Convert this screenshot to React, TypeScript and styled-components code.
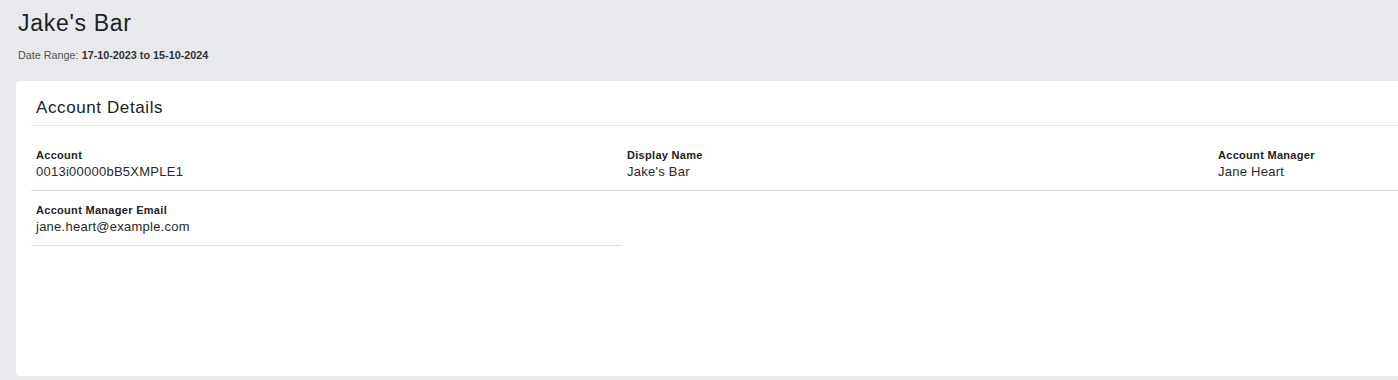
import React from "react";
import styled, { createGlobalStyle } from "styled-components";

const GlobalStyle = createGlobalStyle`
  html, body {
    margin: 0;
    padding: 0;
    overflow: hidden;
    background-color: #e8e9ed;
    font-family: "Liberation Sans", Arial, sans-serif;
  }
`;

type Field = { label: string; value: string };

const fields: Field[] = [
  { label: "Account", value: "0013i00000bB5XMPLE1" },
  { label: "Display Name", value: "Jake's Bar" },
  { label: "Account Manager", value: "Jane Heart" },
  { label: "Account Manager Email", value: "jane.heart@example.com" },
];

const App = (): React.ReactElement => {
  return (
    <>
      <GlobalStyle />
      <Page>
        <Title>Jake's Bar</Title>
        <DateRange>
          Date Range: <strong>17-10-2023 to 15-10-2024</strong>
        </DateRange>
        <Card>
          <CardHeader>Account Details</CardHeader>
          <FieldGrid>
            {fields.map((field) => (
              <FieldCell key={field.label}>
                <FieldLabel>{field.label}</FieldLabel>
                <FieldValue>{field.value}</FieldValue>
              </FieldCell>
            ))}
          </FieldGrid>
        </Card>
      </Page>
    </>
  );
};

export default App;

const Page = styled.div`
  display: flex;
  flex-direction: column;
  padding: 8px 0 0 16px;
  width: max-content;
`;

const Title = styled.h1`
  margin: 0 0 0 2px;
  font-size: 23px;
  line-height: 30px;
  font-weight: 400;
  letter-spacing: 0.7px;
  color: #222;
`;

const DateRange = styled.div`
  margin: 10px 0 0 2px;
  font-size: 10.8px;
  line-height: 14px;
  color: #555;
  & strong {
    color: #333;
    font-weight: 700;
  }
`;

const Card = styled.section`
  margin-top: 19px;
  display: flex;
  flex-direction: column;
  height: 295px;
  box-sizing: border-box;
  padding: 0 15px;
  background-color: #ffffff;
  border-radius: 4px;
`;

const CardHeader = styled.h2`
  margin: 0;
  padding: 16px 5px 6px;
  border-bottom: 1px solid #e6e6e6;
  font-size: 17px;
  line-height: 22px;
  font-weight: 400;
  letter-spacing: 0.6px;
  color: #222;
`;

const FieldGrid = styled.div`
  margin-top: 10px;
  display: grid;
  grid-template-columns: repeat(3, 591px);
`;

const FieldCell = styled.div`
  display: flex;
  flex-direction: column;
  padding: 12px 5px 9px;
  border-bottom: 1px solid #dedede;
`;

const FieldLabel = styled.span`
  margin-bottom: 1px;
  font-size: 11px;
  line-height: 14px;
  font-weight: 700;
  letter-spacing: 0.3px;
  color: #222;
`;

const FieldValue = styled.span`
  font-size: 13px;
  line-height: 18px;
  letter-spacing: 0.25px;
  color: #2a2a2a;
`;
